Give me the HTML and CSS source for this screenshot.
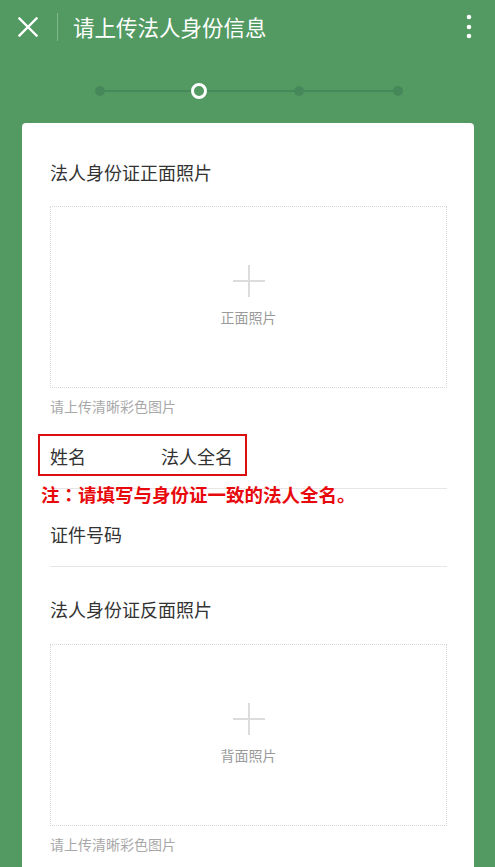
FILE: index.html
```html
<!DOCTYPE html>
<html lang="zh-CN">
<head>
<meta charset="utf-8">
<title>请上传法人身份信息</title>
<link rel="stylesheet" href="styles.css">
</head>
<body>
<header class="topbar">
  <svg class="close" width="20" height="20" viewBox="0 0 20 20"><path d="M1.5 1.5 L18.5 18.5 M18.5 1.5 L1.5 18.5" stroke="#fff" stroke-width="2.4" fill="none" stroke-linecap="square"/></svg>
  <span class="divider"></span>
  <h1 class="title">请上传法人身份信息</h1>
  <svg class="more" width="8" height="26" viewBox="0 0 8 26"><circle cx="4" cy="3" r="2.3" fill="#fff"/><circle cx="4" cy="13" r="2.3" fill="#fff"/><circle cx="4" cy="22" r="2.3" fill="#fff"/></svg>
</header>

<div class="steps">
  <span class="dot"></span>
  <span class="dot current"></span>
  <span class="dot"></span>
  <span class="dot"></span>
</div>

<main class="card">
  <section class="upload-section first">
    <h2 class="sec-title">法人身份证正面照片</h2>
    <div class="upload-box">
      <span class="plus"></span>
      <span class="upload-label">正面照片</span>
    </div>
    <p class="hint">请上传清晰彩色图片</p>
  </section>

  <div class="field name-field">
    <span class="field-label">姓名</span>
    <span class="field-value">法人全名</span>
    <span class="highlight"></span>
    <span class="note">注<span class="colon" lang="ja">：</span>请填写与身份证一致的法人全名。</span>
  </div>

  <div class="field id-field">
    <span class="field-label">证件号码</span>
  </div>

  <section class="upload-section second">
    <h2 class="sec-title">法人身份证反面照片</h2>
    <div class="upload-box">
      <span class="plus"></span>
      <span class="upload-label">背面照片</span>
    </div>
    <p class="hint">请上传清晰彩色图片</p>
  </section>
</main>
</body>
</html>
```

FILE: styles.css
```css
* { box-sizing: border-box; }
html, body { margin: 0; padding: 0; }
body {
  background: #529a62;
  font-family: "Noto Sans CJK SC", "Noto Sans", sans-serif;
  height: 867px;
  overflow: hidden;
}
.topbar {
  height: 54px;
  display: flex;
  align-items: center;
  padding-left: 18px;
  padding-right: 22px;
}
.close { display: block; flex: none; }
.divider {
  width: 1px;
  height: 28px;
  background: rgba(255,255,255,0.28);
  margin-left: 19px;
}
.title {
  margin: 0 0 0 15px;
  font-size: 21.5px;
  font-weight: 400;
  color: #fff;
  line-height: 28px;
  flex: 1;
}
.more { display: block; flex: none; }

.steps {
  position: relative;
  margin: 23px 0 18px 95px;
  width: 308px;
  height: 28px;
  display: flex;
  justify-content: space-between;
  align-items: center;
}
.steps::before {
  content: "";
  position: absolute;
  left: 5px;
  right: 5px;
  top: 13px;
  height: 2px;
  background: #47885a;
}
.dot {
  position: relative;
  width: 10px;
  height: 10px;
  border-radius: 50%;
  background: #47885a;
}
.dot.current {
  width: 16px;
  height: 16px;
  background: #529a62;
  border: 3px solid #fff;
  margin-left: -3px;
  margin-right: -2px;
}

.card {
  background: #fff;
  margin: 0 21px 0 22px;
  border-radius: 4px 4px 0 0;
  padding: 0 27px 0 28px;
  min-height: 760px;
}
.upload-section.first { padding-top: 37px; }
.upload-section.second { padding-top: 30px; }
.sec-title {
  margin: 0;
  font-size: 18px;
  font-weight: 400;
  color: #333;
  line-height: 24px;
}
.upload-box {
  margin-top: 22px;
  height: 182px;
  border: 1px dotted #d6d6d6;
  display: flex;
  flex-direction: column;
  align-items: center;
  padding-top: 58px;
}
.second .upload-box { margin-top: 23px; }
.plus {
  position: relative;
  width: 32px;
  height: 32px;
}
.plus::before, .plus::after {
  content: "";
  position: absolute;
  background: #dcdcdc;
}
.plus::before { left: 0; right: 0; top: 15px; height: 2px; }
.plus::after { top: 0; bottom: 0; left: 15px; width: 2px; }
.upload-label {
  margin-top: 10px;
  font-size: 14px;
  line-height: 20px;
  color: #9a9a9a;
}
.hint {
  margin: 8px 0 0;
  font-size: 14px;
  line-height: 20px;
  color: #a8a8a8;
}

.field {
  position: relative;
  display: flex;
  align-items: center;
  border-bottom: 1px solid #e6e6e6;
  font-size: 18px;
  line-height: 24px;
  color: #333;
}
.name-field { padding: 28px 0 20px; }
.id-field { padding: 33px 0 20px; }
.field-label { width: 111px; }
.highlight {
  position: absolute;
  left: -12px;
  top: 18px;
  width: 209px;
  height: 42px;
  border: 2px solid #d90f10;
}
.note {
  position: absolute;
  left: -9px;
  top: 66px;
  font-size: 18.5px;
  font-weight: 700;
  line-height: 24px;
  color: #e8090c;
  white-space: nowrap;
}
.colon {
  font-family: "Noto Sans CJK JP", "Noto Sans CJK SC", sans-serif;
}
```
